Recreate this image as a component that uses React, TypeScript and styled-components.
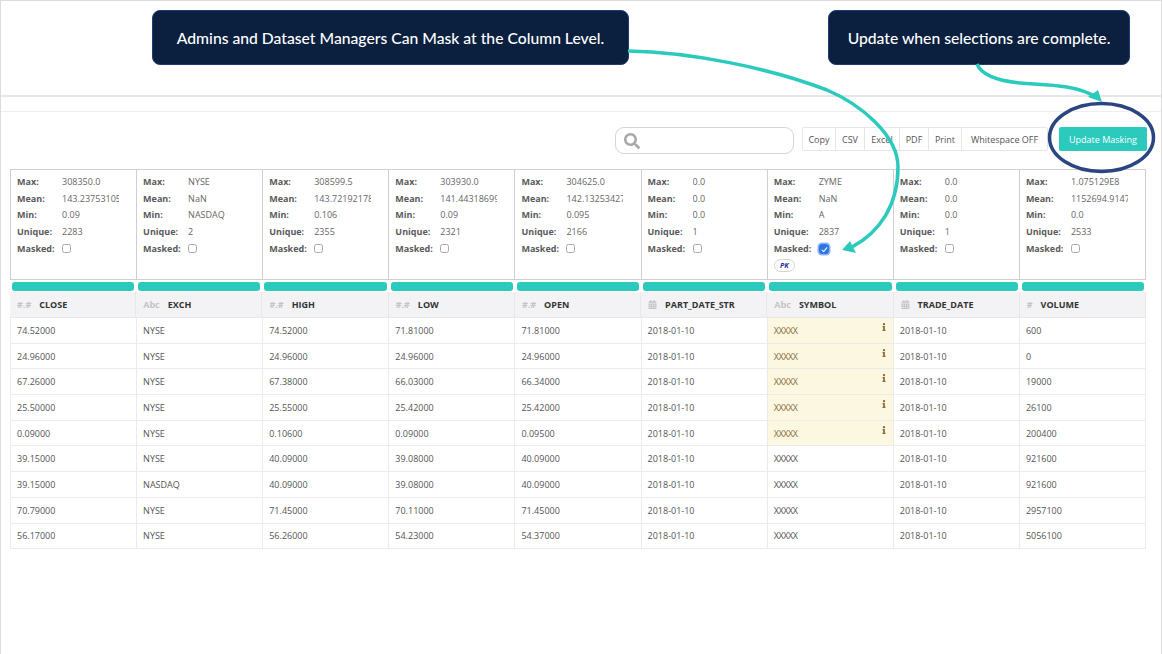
import React from "react";
import styled, { createGlobalStyle } from "styled-components";
import { FaSearch, FaInfo, FaCalendarAlt } from "react-icons/fa";

const GlobalStyle = createGlobalStyle`
  html, body {
    margin: 0;
    padding: 0;
    height: 654px;
    overflow: hidden;
    background: #fff;
    font-family: "Open Sans", "Liberation Sans", sans-serif;
  }
`;

const Page = styled.div`
  position: relative;
  width: 1162px;
  height: 654px;
  box-sizing: border-box;
  border-left: 1px solid #dcdcdc;
  border-right: 1px solid #dcdcdc;
  border-top: 1px solid #dcdcdc;
  overflow: hidden;
`;

const TopBand = styled.div`
  height: 96px;
  box-sizing: border-box;
  padding: 9px 0 0 151px;
  display: flex;
  gap: 199px;
  align-items: flex-start;
  border-bottom: 2px solid #e6e6e6;
`;

const Callout = styled.div<{ $width: number }>`
  width: ${(p) => p.$width}px;
  height: 55px;
  box-sizing: border-box;
  display: flex;
  align-items: center;
  justify-content: center;
  background: #0b203f;
  border: 1px solid #1f3c74;
  border-radius: 8px;
  color: #fff;
  font-family: Lato, "Open Sans", sans-serif;
  font-size: 15.7px;
  font-weight: 500;
`;

const GapBand = styled.div`
  height: 14px;
  border-bottom: 1px solid #eeeeee;
`;

const Toolbar = styled.div`
  height: 57px;
  box-sizing: border-box;
  padding: 15px 0 0 614px;
  display: flex;
  align-items: flex-start;
`;

const SearchBox = styled.div`
  width: 179px;
  height: 27px;
  box-sizing: border-box;
  margin-right: 8px;
  padding-left: 8px;
  display: flex;
  align-items: center;
  border: 1px solid #d4d4d4;
  border-radius: 9px;
  color: #a9a9a9;
  font-size: 16px;
`;

const ButtonGroup = styled.div`
  display: flex;
  height: 24px;
  box-sizing: border-box;
  border: 1px solid #e6e6e6;
  border-radius: 2px;
`;

const GroupButton = styled.div<{ $width: number }>`
  width: ${(p) => p.$width}px;
  box-sizing: border-box;
  display: flex;
  align-items: center;
  justify-content: center;
  font-size: 9px;
  color: #555;
  border-right: 1px solid #e6e6e6;
  &:last-child {
    border-right: none;
  }
`;

const UpdateButton = styled.div`
  width: 88px;
  height: 24px;
  margin-left: 11px;
  display: flex;
  align-items: center;
  justify-content: center;
  background: #2ccabd;
  border-radius: 2px;
  color: #fff;
  font-size: 9px;
  font-weight: 500;
`;

const Table = styled.div`
  width: 1136px;
  margin-left: 9px;
`;

const Columns = styled.div`
  display: grid;
  grid-template-columns: repeat(9, 1fr);
`;

const StatsRow = styled(Columns)`
  height: 111px;
  box-sizing: border-box;
  border: 1px solid #cfcfcf;
  border-right: none;
`;

const StatsCell = styled.div`
  box-sizing: border-box;
  padding: 3px 0 0 6px;
  border-right: 1px solid #cfcfcf;
`;

const StatLine = styled.div`
  display: flex;
  height: 16.7px;
  align-items: center;
  font-size: 9px;
`;

const StatLabel = styled.span`
  width: 45px;
  flex: none;
  font-weight: 700;
  color: #5a5a5a;
`;

const StatValue = styled.span`
  width: 57px;
  overflow: hidden;
  white-space: nowrap;
  color: #666;
`;

const MaskCheck = styled.input.attrs({ type: "checkbox", readOnly: true })`
  appearance: none;
  position: relative;
  width: 9px;
  height: 9px;
  margin: 1px 0 0;
  border: 1px solid #a8a8a8;
  border-radius: 2.5px;
  background: #fff;
  &:checked {
    width: 10px;
    height: 10px;
    background: #2f74e6;
    border-color: #2f74e6;
    border-radius: 3px;
    box-shadow: 0 0 0 1.5px #8fb4f5;
  }
  &:checked::after {
    content: "";
    position: absolute;
    left: 3px;
    top: 1px;
    width: 2px;
    height: 5px;
    border: solid #fff;
    border-width: 0 1px 1px 0;
    transform: rotate(40deg);
  }
`;

const PkBadge = styled.div`
  width: 21px;
  height: 13px;
  box-sizing: border-box;
  margin-top: 3px;
  display: flex;
  align-items: center;
  justify-content: center;
  border: 1px solid #d5d5d5;
  border-radius: 7px;
  color: #1c2f9c;
  font-size: 7px;
  font-style: italic;
  font-weight: 700;
`;

const BarRow = styled(Columns)`
  height: 12px;
  align-items: center;
`;

const TealBar = styled.div`
  height: 9px;
  margin: 0 2px;
  background: #2ccabd;
  border-radius: 3px;
`;

const HeaderRow = styled(Columns)`
  height: 26px;
  background: #f3f3f6;
  border-bottom: 1px solid #e8e8e8;
  box-sizing: border-box;
`;

const HeaderCell = styled.div`
  display: flex;
  align-items: center;
  padding-left: 7px;
  border-right: 1px solid #e8e8e8;
  font-size: 9px;
  font-weight: 700;
  color: #333;
`;

const TypeTag = styled.span`
  display: flex;
  align-items: center;
  flex: none;
  margin-right: 8px;
  color: #c4c4c4;
  font-weight: 700;
`;

const DataRow = styled(Columns)`
  height: 25.7px;
  box-sizing: border-box;
  border-bottom: 1px solid #ebebeb;
  border-left: 1px solid #ebebeb;
`;

const DataCell = styled.div<{ $masked?: boolean }>`
  position: relative;
  display: flex;
  align-items: center;
  padding-left: 6px;
  border-right: 1px solid #ebebeb;
  font-size: 9px;
  color: ${(p) => (p.$masked ? "#8a6d3b" : "#555")};
  background: ${(p) => (p.$masked ? "#fcf7e1" : "transparent")};
`;

const MaskedText = styled.span`
  letter-spacing: -0.4px;
`;

const InfoMark = styled.span`
  position: absolute;
  right: 5px;
  top: 5px;
  display: flex;
  font-size: 8px;
  color: #8a6d3b;
`;

const Overlay = styled.svg`
  position: absolute;
  left: -1px;
  top: -1px;
  pointer-events: none;
`;

type Stat = { name: string; type: string; max: string; mean: string; min: string; unique: string };

const columns: Stat[] = [
  { name: "CLOSE", type: "#.#", max: "308350.0", mean: "143.23753105", min: "0.09", unique: "2283" },
  { name: "EXCH", type: "Abc", max: "NYSE", mean: "NaN", min: "NASDAQ", unique: "2" },
  { name: "HIGH", type: "#.#", max: "308599.5", mean: "143.72192178", min: "0.106", unique: "2355" },
  { name: "LOW", type: "#.#", max: "303930.0", mean: "141.44318699", min: "0.09", unique: "2321" },
  { name: "OPEN", type: "#.#", max: "304625.0", mean: "142.13253427", min: "0.095", unique: "2166" },
  { name: "PART_DATE_STR", type: "date", max: "0.0", mean: "0.0", min: "0.0", unique: "1" },
  { name: "SYMBOL", type: "Abc", max: "ZYME", mean: "NaN", min: "A", unique: "2837" },
  { name: "TRADE_DATE", type: "date", max: "0.0", mean: "0.0", min: "0.0", unique: "1" },
  { name: "VOLUME", type: "#", max: "1.075129E8", mean: "1152694.9147", min: "0.0", unique: "2533" },
];

const rows = [
  ["74.52000", "NYSE", "74.52000", "71.81000", "71.81000", "600"],
  ["24.96000", "NYSE", "24.96000", "24.96000", "24.96000", "0"],
  ["67.26000", "NYSE", "67.38000", "66.03000", "66.34000", "19000"],
  ["25.50000", "NYSE", "25.55000", "25.42000", "25.42000", "26100"],
  ["0.09000", "NYSE", "0.10600", "0.09000", "0.09500", "200400"],
  ["39.15000", "NYSE", "40.09000", "39.08000", "40.09000", "921600"],
  ["39.15000", "NASDAQ", "40.09000", "39.08000", "40.09000", "921600"],
  ["70.79000", "NYSE", "71.45000", "70.11000", "71.45000", "2957100"],
  ["56.17000", "NYSE", "56.26000", "54.23000", "54.37000", "5056100"],
];

const buttons: [string, number][] = [
  ["Copy", 33],
  ["CSV", 29],
  ["Excel", 35],
  ["PDF", 29],
  ["Print", 33],
  ["Whitespace OFF", 85],
];

const App = () => {
  return (
    <Page>
      <GlobalStyle />
      <TopBand>
        <Callout $width={477}>Admins and Dataset Managers Can Mask at the Column Level.</Callout>
        <Callout $width={302}>Update when selections are complete.</Callout>
      </TopBand>
      <GapBand />
      <Toolbar>
        <SearchBox>
          <FaSearch />
        </SearchBox>
        <ButtonGroup>
          {buttons.map(([label, width]) => (
            <GroupButton key={label} $width={width}>
              {label}
            </GroupButton>
          ))}
        </ButtonGroup>
        <UpdateButton>Update Masking</UpdateButton>
      </Toolbar>
      <Table>
        <StatsRow>
          {columns.map((c) => (
            <StatsCell key={c.name}>
              <StatLine>
                <StatLabel>Max:</StatLabel>
                <StatValue>{c.max}</StatValue>
              </StatLine>
              <StatLine>
                <StatLabel>Mean:</StatLabel>
                <StatValue>{c.mean}</StatValue>
              </StatLine>
              <StatLine>
                <StatLabel>Min:</StatLabel>
                <StatValue>{c.min}</StatValue>
              </StatLine>
              <StatLine>
                <StatLabel>Unique:</StatLabel>
                <StatValue>{c.unique}</StatValue>
              </StatLine>
              <StatLine>
                <StatLabel>Masked:</StatLabel>
                <MaskCheck checked={c.name === "SYMBOL"} />
              </StatLine>
              {c.name === "SYMBOL" && <PkBadge>PK</PkBadge>}
            </StatsCell>
          ))}
        </StatsRow>
        <BarRow>
          {columns.map((c) => (
            <TealBar key={c.name} />
          ))}
        </BarRow>
        <HeaderRow>
          {columns.map((c) => (
            <HeaderCell key={c.name}>
              <TypeTag>{c.type === "date" ? <FaCalendarAlt /> : c.type}</TypeTag>
              {c.name}
            </HeaderCell>
          ))}
        </HeaderRow>
        {rows.map((r, i) => (
          <DataRow key={i}>
            <DataCell>{r[0]}</DataCell>
            <DataCell>{r[1]}</DataCell>
            <DataCell>{r[2]}</DataCell>
            <DataCell>{r[3]}</DataCell>
            <DataCell>{r[4]}</DataCell>
            <DataCell>2018-01-10</DataCell>
            <DataCell $masked={i < 5}>
              <MaskedText>XXXXX</MaskedText>
              {i < 5 && (
                <InfoMark>
                  <FaInfo />
                </InfoMark>
              )}
            </DataCell>
            <DataCell>2018-01-10</DataCell>
            <DataCell>{r[5]}</DataCell>
          </DataRow>
        ))}
      </Table>
      <Overlay width="1162" height="654" viewBox="0 0 1162 654">
        <ellipse cx="1101.5" cy="137.5" rx="52" ry="34" fill="none" stroke="#2b4581" strokeWidth="3.5" />
        <path
          d="M628 51 C690 52 770 68 827 90 C860 104 898 135 898 167 C898 205 880 232 852 247"
          fill="none"
          stroke="#2ccabd"
          strokeWidth="3.5"
        />
        <polygon points="842,250 850,241 856,253" fill="#2ccabd" />
        <path
          d="M977 64 C982 76 1000 81 1020 83 C1045 85 1075 84 1096 97"
          fill="none"
          stroke="#2ccabd"
          strokeWidth="3.5"
        />
        <polygon points="1102,102 1088,97 1098,90" fill="#2ccabd" />
      </Overlay>
    </Page>
  );
};

export default App;
